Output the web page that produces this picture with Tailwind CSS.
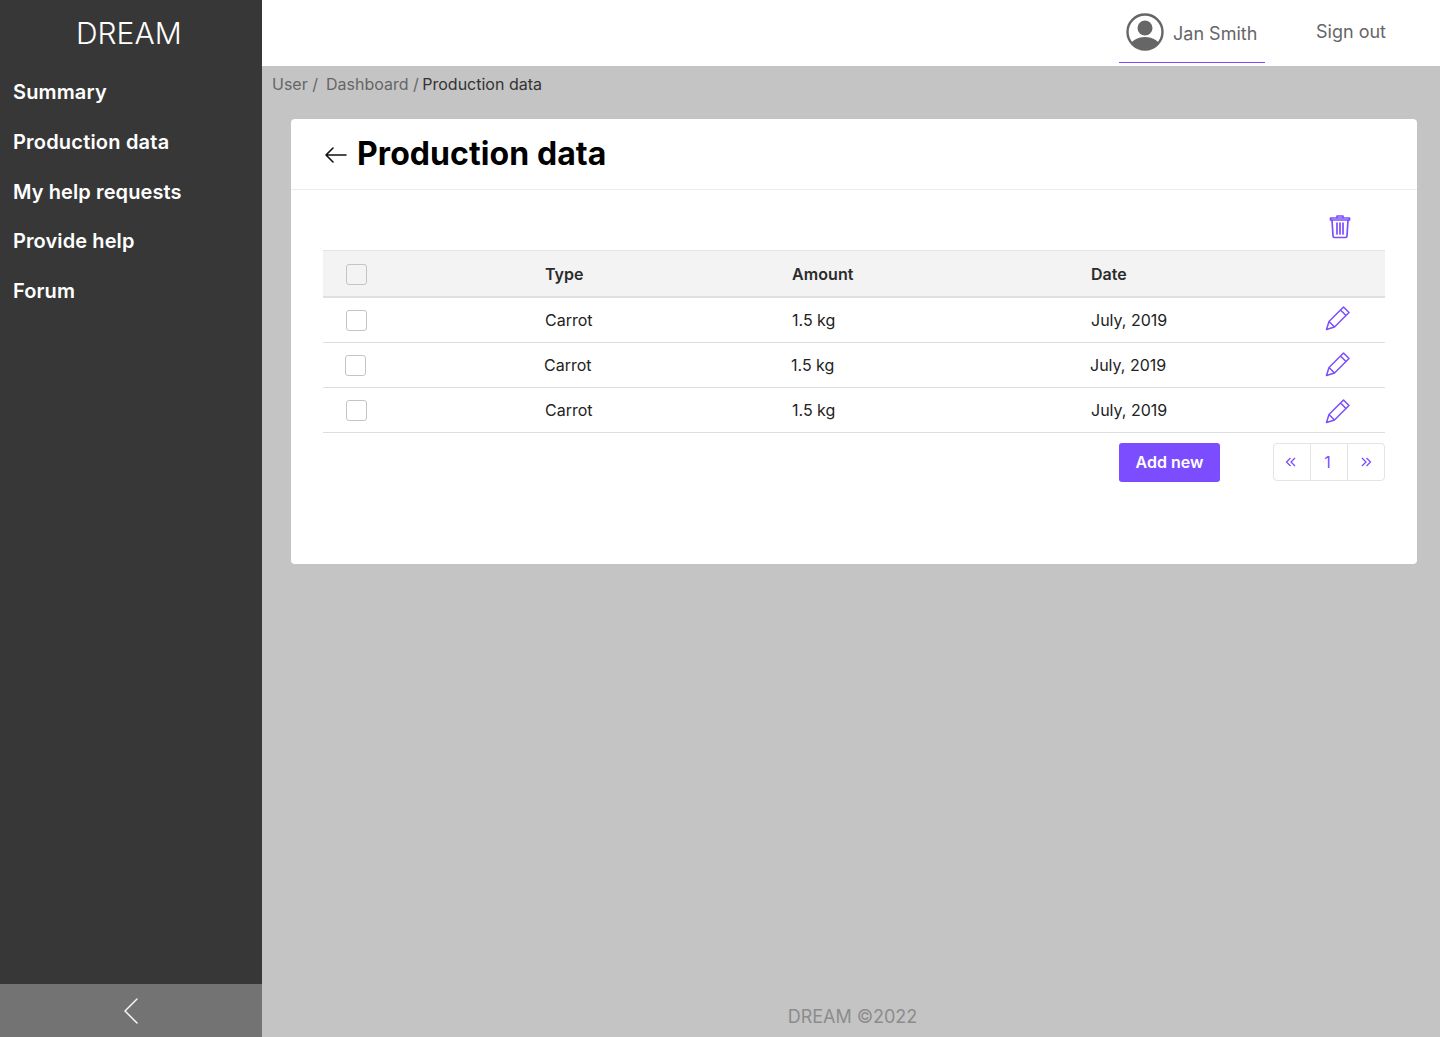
<!DOCTYPE html>
<html lang="en">
<head>
    <meta charset="UTF-8">
    <meta name="viewport" content="width=device-width, initial-scale=1.0">
    <title>Production data</title>
    <script src="https://cdn.jsdelivr.net/npm/@tailwindcss/browser@4"></script>
</head>
<body class="font-['Inter',sans-serif] bg-[#c4c4c4]">
    <div class="flex h-[1037px] overflow-hidden">
        <!-- sidebar -->
        <aside class="w-[262px] shrink-0 flex flex-col bg-[#373737] text-white">
            <div class="h-[67px] pt-[15px] pl-[76px] text-[30px] leading-[36px] font-light">DREAM</div>
            <nav class="flex flex-col pl-[13px] text-[20px] font-semibold leading-[50px]">
                <a class="h-[50px] tracking-[0.15px]">Summary</a>
                <a class="h-[50px] tracking-[0.2px]">Production data</a>
                <a class="h-[49px] tracking-[0.1px]">My help requests</a>
                <a class="h-[50px] tracking-[0.1px]">Provide help</a>
                <a class="h-[50px] tracking-[0.1px]">Forum</a>
            </nav>
            <button class="mt-auto h-[53px] flex items-center justify-center bg-[#737373]">
                <svg width="16" height="28" viewBox="0 0 16 28" fill="none" stroke="#f5f5f5" stroke-width="1.5" stroke-linecap="round" stroke-linejoin="round"><path d="M14 2 L2 14 L14 26"/></svg>
            </button>
        </aside>

        <div class="flex-1 flex flex-col min-w-0">
            <!-- top bar -->
            <header class="h-[66px] shrink-0 bg-white flex justify-end">
                <div class="w-[146px] h-[63px] mr-[51px] flex items-center pl-[7px] pt-[4px] border-b border-[#7c4dff]">
                    <svg width="38" height="38" viewBox="0 0 38 38" class="shrink-0 -mt-[2px]">
                        <defs><clipPath id="round"><circle cx="19" cy="19" r="17.5"/></clipPath></defs>
                        <circle cx="19" cy="19" r="17.5" fill="#fff" stroke="#666" stroke-width="2.4"/>
                        <circle cx="19" cy="15" r="7.5" fill="#666"/>
                        <ellipse cx="19" cy="34" rx="15" ry="10" fill="#666" clip-path="url(#round)"/>
                    </svg>
                    <span class="ml-[9px] text-[18px] text-[#666]">Jan Smith</span>
                </div>
                <a class="w-[124px] pt-[19px] text-[18px] leading-[26px] text-[#666]">Sign out</a>
            </header>

            <div class="h-[37px] pl-[10px] pt-[6px] text-[16px] leading-[24px] text-[#666]">
                User /&nbsp; <span class="-ml-px">Dashboard</span> / <span class="-ml-px text-[#333]">Production data</span>
            </div>

            <!-- card -->
            <main class="ml-[29px] mr-[23px] mt-[16px] h-[445px] bg-white rounded-[4px]">
                <div class="h-[71px] flex items-center pl-[32px] border-b border-[#ececec]">
                    <svg width="26" height="18" viewBox="0 0 26 18" fill="none" stroke="#111" stroke-width="1.6" stroke-linecap="round" stroke-linejoin="round" class="mt-[1px]"><path d="M23 9 H3 M10 2 L3 9 L10 16"/></svg>
                    <h1 class="ml-[8px] text-[32px] leading-[40px] font-bold tracking-[0.08px] text-black">Production data</h1>
                </div>
                <div class="px-[32px]">
                    <div class="h-[60px] flex justify-end items-start pt-[23px] pr-[33px]">
                        <svg width="24" height="26" viewBox="0 0 24 26" fill="none" stroke="#7c4dff" stroke-width="1.7" stroke-linejoin="round" stroke-linecap="round">
                            <path d="M2.5 5 H21.5 V7 H2.5 Z"/>
                            <path d="M9 4.5 V3 H15 V4.5"/>
                            <path d="M4 7 L5 23 Q5 24.5 6.5 24.5 H17.5 Q19 24.5 19 23 L20 7"/>
                            <path d="M9 10 V21 M12 10 V21 M15 10 V21"/>
                        </svg>
                    </div>

                    <div class="grid grid-cols-[222px_247px_299px_1fr] h-[48px] items-center bg-[#f3f3f3] border-t border-[#e3e3e8] border-b-2 border-b-[#dfe0e3] text-[16px] font-semibold text-[#2b2b2b]">
                        <span class="ml-[23px] mt-[1px] w-[21px] h-[21px] rounded-[3px] border border-[#c4c4c4] bg-[#f3f3f3]"></span>
                        <span>Type</span>
                        <span class="tracking-[0.1px]">Amount</span>
                        <span>Date</span>
                    </div>

                    <div class="grid grid-cols-[222px_247px_299px_234px_1fr] h-[45px] items-center border-b border-[#dedede] text-[16px] text-[#222]">
                        <span class="ml-[23px] w-[21px] h-[21px] rounded-[3px] border border-[#c4c4c4]"></span>
                        <span>Carrot</span>
                        <span>1.5 kg</span>
                        <span>July, 2019</span>
                        <svg width="26" height="26" viewBox="0 0 26 26" fill="none" stroke="#7c4dff" stroke-width="1.5" stroke-linejoin="round" class="-mt-[5px]"><path d="M1.5 24.5 L4 16.5 L18.5 2 L24 7.5 L9.5 22 Z M15.5 5 L21 10.5 M4 16.5 L9.5 22"/></svg>
                    </div>
                    <div class="grid grid-cols-[221px_247px_299px_235px_1fr] h-[45px] items-center border-b border-[#dedede] text-[16px] text-[#222]">
                        <span class="ml-[22px] w-[21px] h-[21px] rounded-[3px] border border-[#c4c4c4]"></span>
                        <span>Carrot</span>
                        <span>1.5 kg</span>
                        <span>July, 2019</span>
                        <svg width="26" height="26" viewBox="0 0 26 26" fill="none" stroke="#7c4dff" stroke-width="1.5" stroke-linejoin="round" class="mt-[-2px]"><path d="M1.5 24.5 L4 16.5 L18.5 2 L24 7.5 L9.5 22 Z M15.5 5 L21 10.5 M4 16.5 L9.5 22"/></svg>
                    </div>
                    <div class="grid grid-cols-[222px_247px_299px_234px_1fr] h-[45px] items-center border-b border-[#dedede] text-[16px] text-[#222]">
                        <span class="ml-[23px] w-[21px] h-[21px] rounded-[3px] border border-[#c4c4c4]"></span>
                        <span>Carrot</span>
                        <span>1.5 kg</span>
                        <span>July, 2019</span>
                        <svg width="26" height="26" viewBox="0 0 26 26" fill="none" stroke="#7c4dff" stroke-width="1.5" stroke-linejoin="round" class="mt-[2px]"><path d="M1.5 24.5 L4 16.5 L18.5 2 L24 7.5 L9.5 22 Z M15.5 5 L21 10.5 M4 16.5 L9.5 22"/></svg>
                    </div>

                    <div class="flex justify-end items-start pt-[10px]">
                        <button class="w-[101px] h-[39px] pb-[2px] rounded-[3px] bg-[#7c4dff] text-white text-[16px] font-semibold">Add new</button>
                        <div class="ml-[53px] w-[112px] h-[38px] flex rounded-[4px] border border-[#e3e3e8] text-[#7c4dff]">
                            <span class="w-[37px] pr-[2px] flex items-center justify-center border-r border-[#e3e3e8]">
                                <svg width="12" height="12" viewBox="0 0 12 12" fill="none" stroke="#7c4dff" stroke-width="1.3"><path d="M5.5 2 L1.5 6 L5.5 10 M10 2 L6 6 L10 10"/></svg>
                            </span>
                            <span class="w-[37px] pr-[3px] flex items-center justify-center border-r border-[#e3e3e8] text-[16px]">1</span>
                            <span class="flex-1 flex items-center justify-center">
                                <svg width="12" height="12" viewBox="0 0 12 12" fill="none" stroke="#7c4dff" stroke-width="1.3"><path d="M2 2 L6 6 L2 10 M6.5 2 L10.5 6 L6.5 10"/></svg>
                            </span>
                        </div>
                    </div>
                </div>
            </main>

            <footer class="mt-auto h-[42px] pl-[3px] pt-[10px] text-center text-[18px] leading-[24px] tracking-[-0.05px] text-[#8c8c8c]">DREAM ©2022</footer>
        </div>
    </div>
</body>
</html>
